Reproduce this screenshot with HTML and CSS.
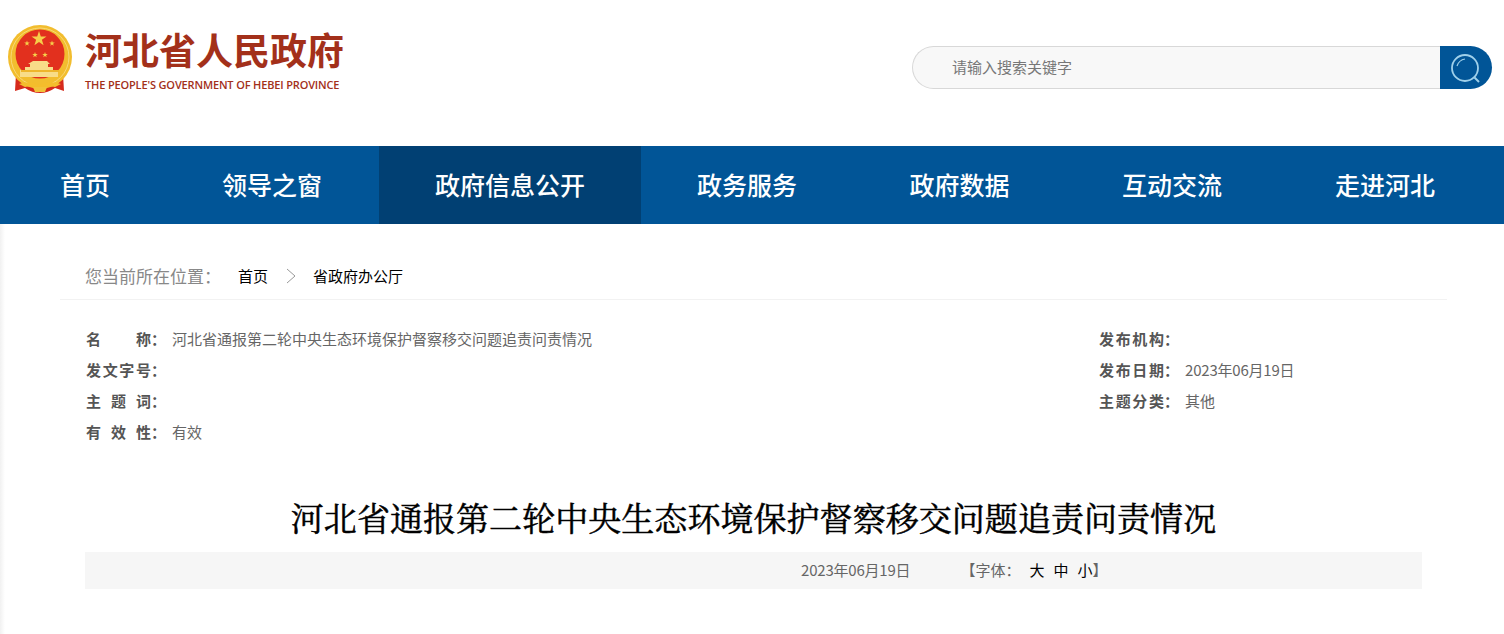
FILE: index.html
```html
<!DOCTYPE html>
<html lang="zh-CN">
<head>
  <meta charset="UTF-8" />
  <title>河北省通报第二轮中央生态环境保护督察移交问题追责问责情况</title>
  <link rel="stylesheet" href="styles.css">
</head>
<body>
  <header class="top">
    <div class="logo">
      <svg class="emblem" width="66" height="70" viewBox="0 0 66 70">
        <path d="M9 50 L8 67 L18 64 Q25 69 33 69 Q41 69 48 64 L57 67 L56 50 Z" fill="#d62a1c"/>
        <circle cx="33" cy="33" r="32" fill="#f2bd2e"/>
        <circle cx="33" cy="33" r="29" fill="none" stroke="#f8d878" stroke-width="1"/>
        <circle cx="33" cy="30" r="24.5" fill="#e2301e"/>
        <path d="M32 7 l1.8 5.4 h5.7 l-4.6 3.4 1.7 5.5 -4.6 -3.4 -4.6 3.4 1.7 -5.5 -4.6 -3.4 h5.7 Z" fill="#f6cf4a"/>
        <path d="M20 16.5 l.7 2 h2.1 l-1.7 1.3 .6 2 -1.7 -1.2 -1.7 1.2 .6 -2 -1.7 -1.3 h2.1 Z" fill="#f6cf4a"/>
        <path d="M45 16.5 l.7 2 h2.1 l-1.7 1.3 .6 2 -1.7 -1.2 -1.7 1.2 .6 -2 -1.7 -1.3 h2.1 Z" fill="#f6cf4a"/>
        <path d="M28 28 l.7 2 h2.1 l-1.7 1.3 .6 2 -1.7 -1.2 -1.7 1.2 .6 -2 -1.7 -1.3 h2.1 Z" fill="#f6cf4a"/>
        <path d="M38 28 l.7 2 h2.1 l-1.7 1.3 .6 2 -1.7 -1.2 -1.7 1.2 .6 -2 -1.7 -1.3 h2.1 Z" fill="#f6cf4a"/>
        <path d="M26 37 h14 l3 3 h-2 v3 h5 v3 h5 v7 H13 v-7 h5 v-3 h5 v-3 h-2 Z" fill="#f8dc88"/>
        <path d="M14 46 h38 v2 H14 Z" fill="#eeb52c"/>
        <path d="M12 60 q10 -4 21 1 q11 -5 21 -1 l-6 3 q-8 -2 -15 2 q-7 -4 -15 -2 Z" fill="#f4bd2c"/>
        <path d="M26 63 h14 l-2 5 h-10 Z" fill="#f2c23a"/>
      </svg>
      <div class="logo-text">
        <div class="logo-cn">河北省人民政府</div>
        <div class="logo-en">THE PEOPLE'S GOVERNMENT OF HEBEI PROVINCE</div>
      </div>
    </div>
    <form class="search">
      <input class="search-input" type="text" placeholder="请输入搜索关键字" />
      <button class="search-btn" type="button" aria-label="搜索">
        <svg width="34" height="34" viewBox="0 0 34 34" fill="none" stroke="#9fd0ea">
          <circle cx="16" cy="16" r="13" stroke-width="1.8"/>
          <path d="M8 14 q2 -6 8 -7" stroke-width="1.2"/>
          <path d="M25.5 25.5 L30 30" stroke-width="2"/>
        </svg>
      </button>
    </form>
  </header>

  <nav class="nav">
    <a class="nav-item home" href="#">首页</a>
    <a class="nav-item leader" href="#">领导之窗</a>
    <a class="nav-item info active" href="#">政府信息公开</a>
    <a class="nav-item service" href="#">政务服务</a>
    <a class="nav-item data" href="#">政府数据</a>
    <a class="nav-item talk" href="#">互动交流</a>
    <a class="nav-item about" href="#">走进河北</a>
  </nav>

  <main class="main">
    <div class="crumbs">
      <span class="crumb-label">您当前所在位置：</span>
      <a href="#">首页</a>
      <svg class="crumb-arrow" width="10" height="16" viewBox="0 0 10 16" fill="none" stroke="#999"><path d="M1 1 L9 8 L1 15"/></svg>
      <a href="#">省政府办公厅</a>
    </div>

    <div class="meta">
      <div class="meta-left">
        <div class="meta-row"><b class="label"><span class="label-text">名称</span>：</b><span class="value">河北省通报第二轮中央生态环境保护督察移交问题追责问责情况</span></div>
        <div class="meta-row"><b class="label"><span class="label-text">发文字号</span>：</b></div>
        <div class="meta-row"><b class="label"><span class="label-text">主题词</span>：</b></div>
        <div class="meta-row"><b class="label"><span class="label-text">有效性</span>：</b><span class="value">有效</span></div>
      </div>
      <div class="meta-right">
        <div class="meta-row"><b class="label"><span class="label-text">发布机构</span>：</b></div>
        <div class="meta-row"><b class="label"><span class="label-text">发布日期</span>：</b><span class="value date">2023年06月19日</span></div>
        <div class="meta-row"><b class="label"><span class="label-text">主题分类</span>：</b><span class="value">其他</span></div>
      </div>
    </div>

    <h1 class="title">河北省通报第二轮中央生态环境保护督察移交问题追责问责情况</h1>

    <div class="tools">
      <span class="date">2023年06月19日</span>
      <span class="tools-font">【字体：<a href="#">大</a><a href="#">中</a><a href="#">小</a>】</span>
    </div>
  </main>
</body>
</html>
```

FILE: styles.css
```css
* { box-sizing: border-box; }
html, body { margin: 0; padding: 0; }
body {
  font-family: "Noto Sans CJK SC", "Liberation Sans", sans-serif;
  font-size: 15px;
  color: #666;
  background: #fff;
  height: 634px;
  overflow: hidden;
}
a { color: inherit; text-decoration: none; }

.top {
  height: 146px;
  display: flex;
  justify-content: space-between;
  align-items: flex-start;
  padding: 24px 12px 0 7px;
}
.logo { display: flex; gap: 12px; }
.emblem { flex: none; }
.logo-cn {
  font-size: 37px;
  font-weight: 700;
  line-height: 42px;
  color: #a3301a;
  margin-top: 4px;
}
.logo-en {
  font-family: "Open Sans", sans-serif;
  font-size: 11px;
  font-weight: 600;
  line-height: 14px;
  letter-spacing: -0.15px;
  color: #a3301a;
  margin-top: 8px;
  white-space: nowrap;
}
.search { display: flex; width: 580px; height: 43px; margin-top: 22px; }
.search-input {
  flex: 1;
  border: 1px solid #d8d8d8;
  border-right: 0;
  border-radius: 22px 0 0 22px;
  background: #f8f8f8;
  padding: 0 0 3px 39px;
  font: 15px "Noto Sans CJK SC", sans-serif;
  outline: none;
}
.search-input::placeholder { color: #777; }
.search-btn {
  width: 52px;
  border: 0;
  padding: 2px 0 0 0;
  background: #015597;
  border-radius: 0 22px 22px 0;
  display: flex;
  align-items: center;
  justify-content: center;
}

.nav {
  height: 78px;
  background: #015597;
  display: flex;
}
.nav-item {
  color: #fff;
  font-size: 25px;
  font-weight: 500;
  line-height: 76px;
  text-align: center;
  white-space: nowrap;
}
.nav-item.home { width: 170px; }
.nav-item.leader { width: 209px; padding-right: 5px; }
.nav-item.info { width: 262px; }
.nav-item.service { width: 212px; }
.nav-item.data { width: 213px; }
.nav-item.talk { width: 212px; }
.nav-item.about { width: 214px; }
.nav-item.active { background: #014073; }

.main {
  height: 410px;
  padding: 0 82px 0 60px;
  background: linear-gradient(to right, #f1f1f1, #fff 5px);
}
.crumbs {
  height: 76px;
  border-bottom: 1px solid #f2f2f2;
  padding: 28px 0 0 25px;
  margin-right: -25px;
  display: flex;
  align-items: center;
  color: #000;
}
.crumb-label { font-size: 17px; color: #888; width: 153px; }
.crumb-arrow { margin: 0 17px 0 18px; }

.meta {
  display: flex;
  justify-content: space-between;
  padding: 23px 0 0 26px;
}
.meta-left { width: 1013px; }
.meta-right { flex: 1; }
.meta-row { height: 31px; line-height: 31px; display: flex; white-space: nowrap; }
.label { width: 86px; flex: none; font-weight: 700; color: #555; }
.label-text {
  display: inline-block;
  width: 65px;
  text-align: justify;
  text-align-last: justify;
}
.date { letter-spacing: -0.2px; }

.title {
  margin: 49px 0 0 25px;
  font-family: "Noto Serif CJK SC", "Noto Sans CJK SC", serif;
  font-size: 33px;
  font-weight: 400;
  letter-spacing: 0.05px;
  -webkit-text-stroke: 0.5px #000;
  line-height: 42px;
  color: #000;
  text-align: center;
  white-space: nowrap;
}
.tools {
  margin: 14px 0 0 25px;
  height: 37px;
  padding: 0 0 2px 716px;
  background: #f6f6f6;
  display: flex;
  align-items: center;
}
.tools-font { margin-left: 50px; }
.tools-font a { color: #000; margin-left: 9px; }
```
